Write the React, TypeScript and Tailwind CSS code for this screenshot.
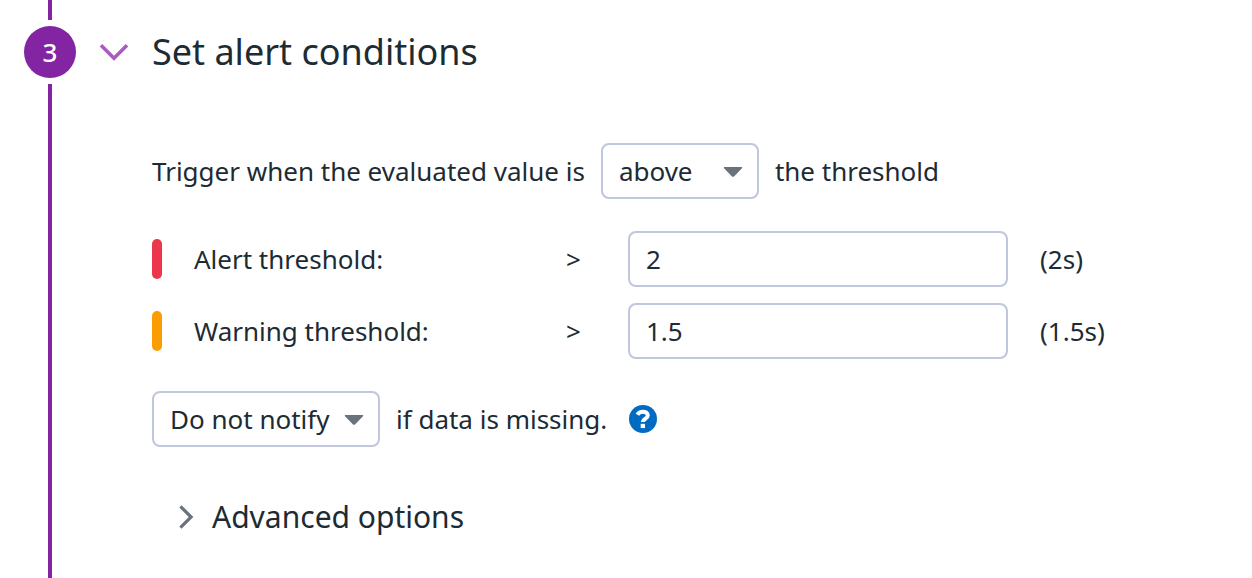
import React from "react";

const selectBox =
  "h-14 w-full appearance-none rounded-lg border-2 border-[#c0c6dd] bg-white pl-4 text-[26px] text-[#1c2b34] outline-none";
const inputBox =
  "h-14 w-95 rounded-lg border-2 border-[#c0c6dd] bg-white px-4 text-[26px] text-[#1c2b34] outline-none";

function Caret() {
  return (
    <svg className="pointer-events-none absolute right-4 top-6 h-2.5 w-5" viewBox="0 0 20 10" aria-hidden="true">
      <path d="M1.5 0h17c.7 0 1 .7.5 1.2l-8 8.2c-.6.6-1.4.6-2 0l-8-8.2C.5.7.8 0 1.5 0z" fill="#6a737b" />
    </svg>
  );
}

function Picker({ label, options, width }: { label: string; options: string[]; width: string }) {
  return (
    <div className={`relative ${width}`}>
      <select aria-label={label} className={selectBox}>
        {options.map((o) => (
          <option key={o}>{o}</option>
        ))}
      </select>
      <Caret />
    </div>
  );
}

function Threshold({ id, label, value, note, color }: { id: string; label: string; value: string; note: string; color: string }) {
  return (
    <div className="flex h-14 items-center">
      <span className={`h-10 w-2.5 rounded-full ${color}`} />
      <label htmlFor={id} className="ml-8 w-[372px]">
        {label}
      </label>
      <span className="w-[62px]">&gt;</span>
      <input id={id} type="text" defaultValue={value} className={inputBox} />
      <span className="ml-8">{note}</span>
    </div>
  );
}

export default function App() {
  return (
    <main className="flex min-h-screen bg-white pl-6 font-['Noto_Sans',sans-serif] text-[26px] leading-9 text-[#1c2b34]">
      <div className="flex w-13 shrink-0 flex-col items-center">
        <span className="h-5 w-1 bg-[#8324a2]" />
        <span className="my-1.5 flex size-13 items-center justify-center rounded-full bg-[#8324a2] text-[26px] font-medium text-white">
          3
        </span>
        <span className="w-1 grow bg-[#8324a2]" />
      </div>
      <section className="pl-6">
        <h2 className="mt-6 text-4xl leading-14">
          <button type="button" className="flex items-center gap-6">
            <svg className="h-5 w-7 overflow-visible" viewBox="0 0 28 20" fill="none" aria-hidden="true">
              <path d="M1 3.3L14 16.3L27 3.3" stroke="#a95bbe" strokeWidth="3.6" />
            </svg>
            Set alert conditions
          </button>
        </h2>
        <div className="pl-13">
          <div className="mt-[63px] flex items-center gap-4">
            <span>Trigger when the evaluated value is</span>
            <Picker label="Comparison" options={["above", "below"]} width="w-[158px]" />
            <span>the threshold</span>
          </div>
          <div className="mt-8 flex flex-col gap-4">
            <Threshold id="alert" label="Alert threshold:" value="2" note="(2s)" color="bg-[#eb364b]" />
            <Threshold id="warning" label="Warning threshold:" value="1.5" note="(1.5s)" color="bg-[#f99d02]" />
          </div>
          <div className="mt-8 flex items-center gap-4">
            <Picker label="Missing data" options={["Do not notify", "Notify"]} width="w-57" />
            <span>if data is missing.</span>
            <button type="button" aria-label="Help" className="ml-1.5">
              <svg className="size-7" viewBox="0 0 28 28" fill="none" aria-hidden="true">
                <circle cx="14" cy="14" r="14" fill="#006bc2" />
                <path d="M8.4 9.8C9.6 7.6 11.4 6.7 13.900 6.700c2.900 0 4.900 1.400 4.900 3.700 0 3.400-5 3.200-5 6.600" stroke="#fff" strokeWidth="4" />
                <path d="M11.700 18.800h4.300v4.300h-4.300z" fill="#fff" />
              </svg>
            </button>
          </div>
          <button type="button" className="mt-12 ml-6 flex items-center gap-4 text-[30px] leading-11">
            <svg className="h-6 w-5 overflow-visible" viewBox="0 0 20 24" fill="none" aria-hidden="true">
              <path d="M4.4 1.300l10.700 10.700L4.400 22.700" stroke="#6a737b" strokeWidth="3.2" />
            </svg>
            Advanced options
          </button>
        </div>
      </section>
    </main>
  );
}
